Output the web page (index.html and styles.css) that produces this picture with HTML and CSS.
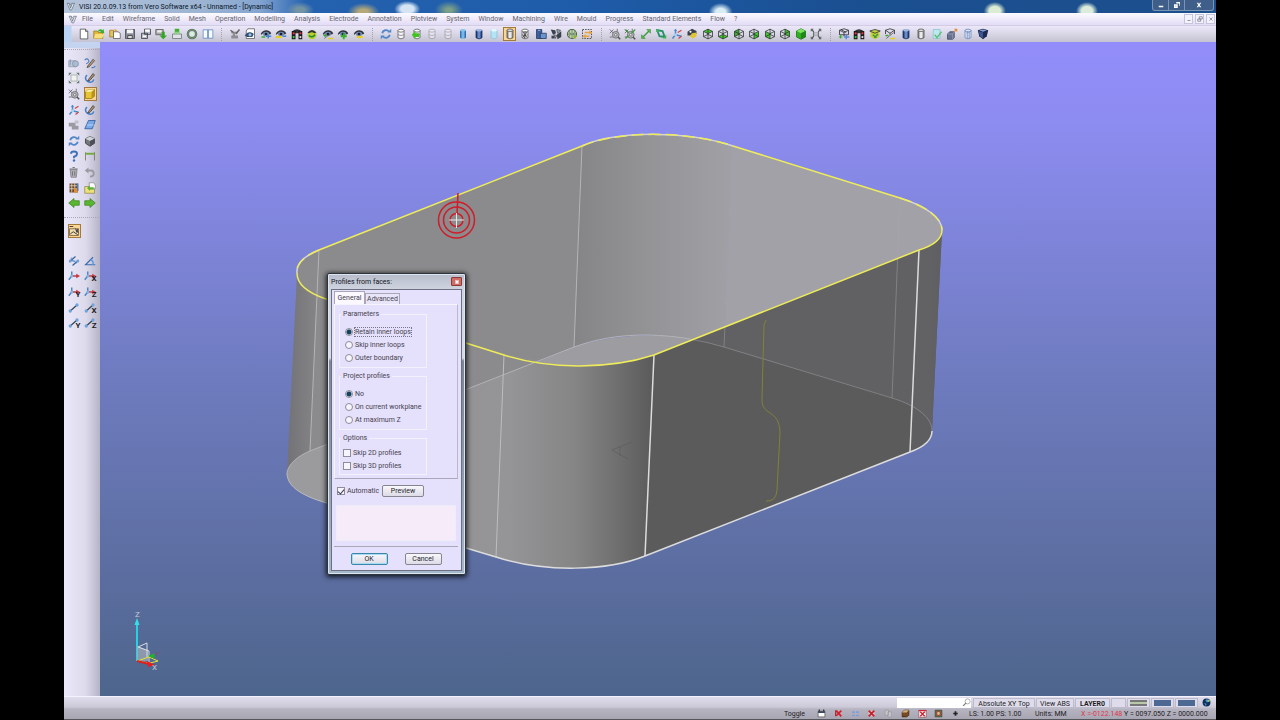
FILE: index.html
```html
<!DOCTYPE html>
<html lang="en">
<head>
<meta charset="utf-8">
<title>VISI 20.0.09.13 from Vero Software x64 - Unnamed - [Dynamic]</title>
<link rel="stylesheet" href="styles.css">
</head>
<body>
<svg class="sprite" aria-hidden="true">
  <defs>
    <linearGradient id="g-blue"><stop offset="0" stop-color="#1c63b0"/><stop offset=".5" stop-color="#8cc8f0"/><stop offset="1" stop-color="#1c5ca4"/></linearGradient>
    <linearGradient id="g-navy"><stop offset="0" stop-color="#0c2760"/><stop offset=".5" stop-color="#7f9fd8"/><stop offset="1" stop-color="#102c68"/></linearGradient>
    <linearGradient id="g-grey"><stop offset="0" stop-color="#777"/><stop offset=".5" stop-color="#fff"/><stop offset="1" stop-color="#888"/></linearGradient>
  </defs>
  <symbol id="logo" viewBox="0 0 16 16"><path d="M2 2l4 1 2 8 3-8 4-1-5 12H7z" fill="#e9edf2" stroke="#4a5560"/><path d="M5 1l3 4 3-4" fill="none" stroke="#6b7783"/></symbol>
  <symbol id="new" viewBox="0 0 16 16"><path d="M3 1.500h7l3 3v10H3z" fill="#fff" stroke="#444"/><path d="M10 1.500v3h3" fill="none" stroke="#444"/></symbol>
  <symbol id="open" viewBox="0 0 16 16"><path d="M1 4h5l1 2h6v8H1z" fill="#e3b83a" stroke="#9a7a20"/><path d="M3 8h12l-3 6H1z" fill="#f8df7c"/><path d="M6 5c2-4 5-4 7-2l1-2 1 6-6-1 2-1c-1-1-3-1-5 0z" fill="#39b02c"/></symbol>
  <symbol id="openpg" viewBox="0 0 16 16"><path d="M1 3h5v9H1z" fill="#e8c55a" stroke="#9a7a20"/><path d="M6 5h6l3 2v7H6z" fill="#fff" stroke="#555"/><path d="M7 1l4 2-3 2" fill="#e8a030"/></symbol>
  <symbol id="save" viewBox="0 0 16 16"><path d="M2 2h12v12H2z" fill="#8a8e98" stroke="#3c4048"/><path d="M4 2h8v5H4z" fill="#f4f4f4"/><path d="M5 10h6v4H5z" fill="#ddd" stroke="#333"/></symbol>
  <symbol id="saveall" viewBox="0 0 16 16"><path d="M6 1.500h8v7H6zM2 7h8v7H2z" fill="#b8bcc6" stroke="#343840"/><path d="M7 2h6v3H7zM4 10h4v2H4z" fill="#fff"/></symbol>
  <symbol id="import" viewBox="0 0 16 16"><path d="M1 2h10v7H1z" fill="#aaa" stroke="#555"/><path d="M3 3h6v3H3z" fill="#eee"/><path d="M9 5h4v5h3l-5 5-5-5h3z" fill="#35a428"/></symbol>
  <symbol id="print" viewBox="0 0 16 16"><path d="M5 1h6v7H5z" fill="#3fb031"/><path d="M2 8h12v6H2z" fill="#dfe3e6" stroke="#687078"/><path d="M4 8l1-3h6l1 3z" fill="#8ed082"/></symbol>
  <symbol id="ring" viewBox="0 0 16 16"><circle cx="8" cy="8" r="5.500" fill="none" stroke="#4d6c57" stroke-width="3"/><circle cx="8" cy="8" r="5.500" fill="none" stroke="#8fae88"/><circle cx="8" cy="8" r="3" fill="#d8efe0"/></symbol>
  <symbol id="book" viewBox="0 0 16 16"><path d="M1 2h14v12H1z" fill="#5b86bd"/><path d="M2 3h5v10H2zM9 3h5v10H9z" fill="#f7fbff"/></symbol>
  <symbol id="hammer" viewBox="0 0 16 16"><path d="M3 5h9v2H8v3h4v4H3v-4h2V7H3z" fill="#8d8d92"/><path d="M9 8l5-6M2 3l4 3" stroke="#666" stroke-width="2"/></symbol>
  <symbol id="eye" viewBox="0 0 16 16"><path d="M1 8C3 2 12 1 15 7l-2 2C11 4 5 5 2 9z" fill="#30343c"/><ellipse cx="8" cy="8" rx="4" ry="3" fill="#7089b0"/><circle cx="8" cy="8" r="1.800" fill="#16202e"/></symbol>
  <symbol id="eyepg" viewBox="0 0 16 16"><path d="M5 1h9v13H3V4z" fill="#fff" stroke="#555"/><path d="M1 10c3-5 8-6 12-2l-2 4H4z" fill="#33506e"/><circle cx="8" cy="9" r="2" fill="#9cc4ea"/></symbol>
  <symbol id="eyeblue" viewBox="0 0 16 16"><use href="#eye"/><path d="M8 11h7M11 8v6" stroke="#4a80d8" stroke-width="2"/><path d="M2 12h5" stroke="#38a838" stroke-width="2"/></symbol>
  <symbol id="eyebar" viewBox="0 0 16 16"><use href="#eye"/><path d="M1 12h8" stroke="#e2cf22" stroke-width="3"/><path d="M10 11h5" stroke="#4a80d8" stroke-width="2"/></symbol>
  <symbol id="traffic" viewBox="0 0 16 16"><path d="M2 4q6-5 12 0v3H2z" fill="#333"/><path d="M1 4h5v11H1zM10 4h5v11h-5z" fill="#1c1c1c"/><circle cx="3.500" cy="7" r="1.500" fill="#e33"/><circle cx="3.500" cy="12" r="1.500" fill="#3c3"/><circle cx="12.500" cy="7" r="1.500" fill="#e33"/><circle cx="12.500" cy="12" r="1.500" fill="#ddd"/></symbol>
  <symbol id="eyeball" viewBox="0 0 16 16"><circle cx="8" cy="9" r="6" fill="#b7cf33"/><path d="M2 6q6-7 12 0l-3 1q-3-3-7 0z" fill="#333"/><path d="M4 10q4 4 8-1" stroke="#268a2a" stroke-width="2" fill="none"/></symbol>
  <symbol id="eyepm" viewBox="0 0 16 16"><use href="#eye"/><path d="M3 14L12 7" stroke="#555"/><path d="M8 14h7" stroke="#e2cf22" stroke-width="2"/><path d="M2 10h4M4 8v4" stroke="#35a428" stroke-width="1.500"/></symbol>
  <symbol id="eyeplus" viewBox="0 0 16 16"><use href="#eye"/><path d="M5 11h8M9 7v8" stroke="#35b028" stroke-width="2.500"/></symbol>
  <symbol id="eyeminus" viewBox="0 0 16 16"><use href="#eye"/><path d="M5 12h8" stroke="#e8d020" stroke-width="3"/></symbol>
  <symbol id="refresh" viewBox="0 0 16 16"><path d="M3 7a5 5 0 0 1 9-2M13 9a5 5 0 0 1-9 2" fill="none" stroke="#5287c8" stroke-width="2.500"/><path d="M10 6h5V1zM6 10H1v5z" fill="#5287c8"/></symbol>
  <symbol id="cyl" viewBox="0 0 16 16"><path d="M4 3v10q4 3 8 0V3" fill="#f5f5f8" stroke="#555"/><ellipse cx="8" cy="3.500" rx="4" ry="2" fill="#fff" stroke="#555"/><path d="M4 9q4 2 8 0" fill="none" stroke="#777"/></symbol>
  <symbol id="cylgreen" viewBox="0 0 16 16"><use href="#cyl"/><path d="M1 9l5-5v3h5v5H6v3z" fill="#43c322"/></symbol>
  <symbol id="cylfade" viewBox="0 0 16 16"><use href="#cyl" opacity=".45"/></symbol>
  <symbol id="cylblue" viewBox="0 0 16 16"><path d="M4 3v10q4 3 8 0V3z" fill="url(#g-blue)"/><ellipse cx="8" cy="3" rx="4" ry="1.600" fill="#8ec4ea"/></symbol>
  <symbol id="cylnavy" viewBox="0 0 16 16"><path d="M4 3v10q4 3 8 0V3z" fill="url(#g-navy)" stroke="#122c5c"/><ellipse cx="8" cy="3" rx="4" ry="1.600" fill="#9fb8e2"/></symbol>
  <symbol id="cylcyan" viewBox="0 0 16 16"><path d="M4 3v10q4 3 8 0V3z" fill="#b5e3f4" stroke="#85bfd8"/><ellipse cx="8" cy="3" rx="4" ry="1.600" fill="#e7f8ff"/></symbol>
  <symbol id="cylgrey" viewBox="0 0 16 16"><path d="M4 3v10q4 3 8 0V3z" fill="url(#g-grey)" stroke="#444"/><ellipse cx="8" cy="3" rx="4" ry="1.600" fill="#eee" stroke="#444"/></symbol>
  <symbol id="cylhatch" viewBox="0 0 16 16"><use href="#cyl"/><path d="M5 5l6 8M11 5l-6 8M5 9l3 5M8 4v9" stroke="#333"/></symbol>
  <symbol id="cylwire" viewBox="0 0 16 16"><path d="M4 3v10q4 3 8 0V3M7 4v10M9.500 4v10" fill="#dfe6f7" stroke="#6680b8"/><ellipse cx="8" cy="3.500" rx="4" ry="2" fill="none" stroke="#6680b8"/></symbol>
  <symbol id="boxes" viewBox="0 0 16 16"><path d="M2 2h7v12H2z" fill="#3b5f9c" stroke="#1d355f"/><path d="M7 7h8v7H7z" fill="#6c94cc" stroke="#1d355f"/><path d="M4 3h3" stroke="#cde"/></symbol>
  <symbol id="pieces" viewBox="0 0 16 16"><path d="M1 2l6 1 1 4-4 2zM9 9l6-5v8l-5 3zM2 10l4 1v3H2z" fill="#39424e"/><path d="M9 2l5 1-4 4zM5 9l4 1-2 4z" fill="#9fb0c2" stroke="#444"/></symbol>
  <symbol id="globe" viewBox="0 0 16 16"><circle cx="8" cy="8" r="6" fill="#c7d6bd" stroke="#49653f" stroke-width="1.500"/><path d="M2 8h12M8 2v12M4 4q4 4 0 8M12 4q-4 4 0 8" stroke="#55774c" fill="none"/><path d="M9 10h6l-3 5z" fill="#8fb437"/></symbol>
  <symbol id="swap" viewBox="0 0 16 16"><path d="M2 2h12v12H2z" fill="none" stroke="#444" stroke-dasharray="2 1.500" stroke-width="1.200"/><path d="M5 5h6V3l4 3-4 3V7H5zM11 10H6V8l-4 3 4 3v-2h5z" fill="#e8a33a"/></symbol>
  <symbol id="gear" viewBox="0 0 16 16"><path d="M1 2l5 5M1 7l5-5M11 1v4M1 12h4" stroke="#555"/><circle cx="9" cy="9" r="4.500" fill="#b0b3b9" stroke="#666"/><circle cx="9" cy="9" r="1.700" fill="#eee" stroke="#666"/><path d="M12 12l3 3" stroke="#555" stroke-width="2"/></symbol>
  <symbol id="geargreen" viewBox="0 0 16 16"><use href="#gear"/><path d="M2 2l4 4M15 2l-5 5M2 14l4-4" stroke="#3b9b3b" stroke-width="1.500"/></symbol>
  <symbol id="dim" viewBox="0 0 16 16"><path d="M4 12L12 4" stroke="#3c9d3c" stroke-width="2"/><path d="M9 2h5v5zM2 9v5h5z" fill="#58b948" stroke="#2b7a2b" stroke-width=".6"/></symbol>
  <symbol id="loop" viewBox="0 0 16 16"><path d="M3 3l7 1 3 8-7-1z" fill="none" stroke="#25906a" stroke-width="2.500"/><path d="M1 5l4-4v5zM15 9v5h-5z" fill="#3fb554"/></symbol>
  <symbol id="axes" viewBox="0 0 16 16"><path d="M6 9V2M6 9l8 2M6 9l-4 5" stroke="#4a88c8" stroke-width="2"/><path d="M4 4l2-3 2 3z" fill="#4a88c8"/><path d="M9 6l5-3M10 14l4-3" stroke="#c44" stroke-width="1.500"/><circle cx="6" cy="9" r="2" fill="#aad0f0"/></symbol>
  <symbol id="python" viewBox="0 0 16 16"><path d="M2 5l6-4 6 3v4l-6 2H2z" fill="#38434c"/><path d="M8 7l6-1v5l-5 3-4-3z" fill="#e2c52e"/><circle cx="6" cy="5" r="1.400" fill="#fff"/></symbol>
  <symbol id="cube" viewBox="0 0 16 16"><path d="M8 1.500l6 3v7l-6 3-6-3v-7zM2 4.500l6 3 6-3M8 7.500v7M8 1.500v7M2 11.500l6-3 6 3" fill="none" stroke="#27332a"/></symbol>
  <symbol id="cubetop" viewBox="0 0 16 16"><path d="M8 1.500l6 3-6 3-6-3z" fill="#42c72f"/><use href="#cube"/></symbol>
  <symbol id="cubebot" viewBox="0 0 16 16"><path d="M8 8.500l6 3-6 3-6-3z" fill="#42c72f"/><use href="#cube"/></symbol>
  <symbol id="cubeback" viewBox="0 0 16 16"><path d="M2 4.500l6-3v7l-6 3z" fill="#42a72f"/><use href="#cube"/></symbol>
  <symbol id="cuberight" viewBox="0 0 16 16"><path d="M8 7.500l6-3v7l-6 3z" fill="#42c72f"/><use href="#cube"/></symbol>
  <symbol id="cubeleft" viewBox="0 0 16 16"><path d="M2 4.500l6 3v7l-6-3z" fill="#42c72f"/><use href="#cube"/></symbol>
  <symbol id="cubefar" viewBox="0 0 16 16"><path d="M8 1.500l6 3v7l-6-3z" fill="#42b72f"/><use href="#cube"/></symbol>
  <symbol id="cubefull" viewBox="0 0 16 16"><path d="M8 1l6 3v8l-6 3-6-3V4z" fill="#2fae20" stroke="#1a6f16"/><path d="M8 1l6 3-6 3-6-3z" fill="#7be35e"/><path d="M8 7l6-3v8l-6 3z" fill="#22861a"/></symbol>
  <symbol id="fit" viewBox="0 0 16 16"><path d="M2 2l3 3M14 2l-3 3M2 14l3-3M14 14l-3-3M5 5v6M11 5v6M8 6v1M8 9v1" stroke="#545c54" stroke-width="1.500"/><path d="M1 1h4L1 5zM15 1v4l-4-4zM1 15v-4l4 4zM15 15h-4l4-4z" fill="#5d6a60"/></symbol>
  <symbol id="gridblue" viewBox="0 0 16 16"><path d="M2 3l6-2 6 2v6H2zM2 3l6 3 6-3M8 6v5M4 2l7 4" fill="none" stroke="#222"/><path d="M1 12h5M3.500 9v5" stroke="#3a3" stroke-width="1.500"/><path d="M8 12h7M11 9v6" stroke="#5a88d8" stroke-width="2"/></symbol>
  <symbol id="gridyel" viewBox="0 0 16 16"><path d="M2 5l6-3 6 3v7l-6 3-6-3z" fill="#c4d03c"/><path d="M1 4l7-2 7 2-7 3z" fill="none" stroke="#222"/><path d="M5 9l5 4M12 8l-5 5" stroke="#3b9b3b" stroke-width="2"/></symbol>
  <symbol id="gridpm" viewBox="0 0 16 16"><path d="M2 3l6-2 6 2-6 4zM2 3v5M14 3v5M8 7v2" fill="none" stroke="#222"/><path d="M3 14l10-8" stroke="#555"/><path d="M8 14h7" stroke="#e2cf22" stroke-width="2"/><path d="M2 10h4" stroke="#3a3" stroke-width="2"/></symbol>
  <symbol id="check" viewBox="0 0 16 16"><path d="M3 2h9v12H3z" fill="#bde8ec" stroke="#86c3ce"/><path d="M5 9l3 4 6-8" fill="none" stroke="#64bf83" stroke-width="2"/></symbol>
  <symbol id="extrude" viewBox="0 0 16 16"><path d="M2 8l3-3h6v8l-2 2H2z" fill="#68738f" stroke="#3c4560"/><path d="M2 8h7v7M9 8l2-3" fill="none" stroke="#98a3be"/><path d="M10 5l2-2-1-2h4v4l-2-1-2 2z" fill="#e28b3a"/></symbol>
  <symbol id="gem" viewBox="0 0 16 16"><path d="M1 3l7-2 7 2-2 8-5 4-5-4z" fill="#1c2b52"/><path d="M2 4l6 2v8l-4-3z" fill="#3c5690"/><path d="M3 3l5-1 5 1-5 2z" fill="#8ba4d6"/></symbol>
  <symbol id="pencil" viewBox="0 0 16 16"><path d="M5 12L12 3l2 2-7 8-3 1z" fill="#b89c80" stroke="#4a3d32"/><path d="M1 4q3-3 5 0t-3 5M10 14q3 1 5-2" fill="none" stroke="#4a80c8" stroke-width="1.500"/></symbol>
  <symbol id="pencurve" viewBox="0 0 16 16"><path d="M4 4q-4 4 0 8 7 4 9-2" fill="none" stroke="#4a80c8" stroke-width="2"/><path d="M6 10l6-8 2 2-6 7-3 1z" fill="#a58f76" stroke="#4a3d32"/></symbol>
  <symbol id="view" viewBox="0 0 16 16"><path d="M1 5h9v8H1z" fill="#c3cbd6" stroke="#8f98a6"/><circle cx="10" cy="9" r="4" fill="#a9bcd4" stroke="#7f8fa6"/><path d="M3 3v8" stroke="#6c8fb8"/></symbol>
  <symbol id="zoomfit" viewBox="0 0 16 16"><path d="M4 4h8v8H4z" fill="#f0f2f0" stroke="#9aa89a"/><path d="M1 1h4L1 5zM15 1v4l-4-4zM1 15v-4l4 4zM15 15h-4l4-4z" fill="#5f7a68"/></symbol>
  <symbol id="solid" viewBox="0 0 16 16"><path d="M2 5l4-3h8v9l-4 3H2z" fill="#e5c534" stroke="#8e7412"/><path d="M2 5l4-3h8l-4 3z" fill="#fbf1a8"/><path d="M10 5l4-3v9l-4 3z" fill="#b8931e"/></symbol>
  <symbol id="stack" viewBox="0 0 16 16"><path d="M1 5h9v5H1zM5 9h9v5H5z" fill="#9a9aa0"/><path d="M9 2h5v4H9z" fill="#c0c0c4"/></symbol>
  <symbol id="sheet" viewBox="0 0 16 16"><path d="M6 2h9l-4 11H1z" fill="#78a9e8" stroke="#2a5596"/><path d="M4 8h9" stroke="#cfe3ff"/></symbol>
  <symbol id="box" viewBox="0 0 16 16"><path d="M2 5l6-3 6 3v6l-6 4-6-4z" fill="#74777c" stroke="#333"/><path d="M2 5l6-3 6 3-6 3z" fill="#cfd2d6"/><path d="M8 8l6-3v6l-6 4z" fill="#4e5156"/></symbol>
  <symbol id="help" viewBox="0 0 16 16"><path d="M4 5q0-3 4-3t4 3-4 4v2" fill="none" stroke="#3f6fb4" stroke-width="2.500"/><circle cx="8" cy="14" r="1.600" fill="#3f6fb4"/></symbol>
  <symbol id="span" viewBox="0 0 16 16"><path d="M2 3v11M14 3v11" stroke="#6d6d50"/><path d="M2 5h12" stroke="#74a83a" stroke-width="2.500"/></symbol>
  <symbol id="trash" viewBox="0 0 16 16"><path d="M3 5h9l-1 10H4z" fill="#b4b4b8" stroke="#77777c"/><path d="M2 4h11M6 2h3M6 7v6M9 7v6" stroke="#77777c" stroke-width="1.500"/></symbol>
  <symbol id="undo" viewBox="0 0 16 16"><path d="M5 6h4q4 0 4 4t-5 4" fill="none" stroke="#9a9aa0" stroke-width="2.500"/><path d="M6 2v8L1 6z" fill="#9a9aa0"/></symbol>
  <symbol id="tree" viewBox="0 0 16 16"><path d="M2 2h11v12H2z" fill="#6d4a2a"/><path d="M2 5h11M2 9h11M5 2v12M9 2v12" stroke="#e8e0d0"/><path d="M8 8h5v6H8z" fill="#e88a28"/><path d="M13 2v10" stroke="#4a80c8" stroke-width="2"/></symbol>
  <symbol id="note" viewBox="0 0 16 16"><path d="M1 6h9l4 3v6H1z" fill="#efe07a" stroke="#8e8850"/><path d="M7 1h6l2 3v5H7z" fill="#fff" stroke="#888"/><path d="M4 8l4-3v2h5v3H8v2z" fill="#5fb038"/></symbol>
  <symbol id="left" viewBox="0 0 16 16"><path d="M1 8l7-6v3h7v6H8v3z" fill="#5cb531" stroke="#3a851e"/></symbol>
  <symbol id="right" viewBox="0 0 16 16"><path d="M15 8L8 2v3H1v6h7v3z" fill="#5cb531" stroke="#3a851e"/></symbol>
  <symbol id="face" viewBox="0 0 16 16"><path d="M2 5h12v9H2z" fill="#f1dcae" stroke="#6b5637"/><path d="M3 12l4-3 6 4M2 2h5" stroke="#333" stroke-width="1.200" fill="none"/><path d="M9 3l2 3 3-1-1 3 2 2-4 0z" fill="#3f4752"/></symbol>
  <symbol id="parallel" viewBox="0 0 16 16"><path d="M2 9l8-7M6 14l8-7" stroke="#35618f" stroke-width="1.500"/><path d="M3 5l9 6M5 3v5h5" stroke="#4a80c8" fill="none"/><circle cx="3" cy="8" r="2" fill="#6fa0d8"/><circle cx="13" cy="8" r="2" fill="#6fa0d8"/></symbol>
  <symbol id="angle" viewBox="0 0 16 16"><path d="M12 3L2 13h13" fill="none" stroke="#3c6cae" stroke-width="1.500"/><path d="M9 6q4 2 3 7" fill="none" stroke="#5d9be0" stroke-width="2"/></symbol>
  <symbol id="triad" viewBox="0 0 16 16"><path d="M5 8V2M5 8l-4 5" stroke="#4a88c8" stroke-width="2"/><path d="M5 8h7" stroke="#c43840" stroke-width="2"/><path d="M11 5l5 3-5 3z" fill="#c43840"/><circle cx="5" cy="8" r="2" fill="#82b4e4"/></symbol>
  <symbol id="seg" viewBox="0 0 16 16"><path d="M3 12L12 4" stroke="#2d3f52" stroke-width="1.500"/><circle cx="3" cy="12" r="2.200" fill="#6fa4dc"/><circle cx="12" cy="4" r="2.200" fill="#6fa4dc"/></symbol>
  <symbol id="redx" viewBox="0 0 16 16"><path d="M3 3h10v10H3z" fill="#d8c7cb"/><path d="M3 3l10 10M13 3L3 13" stroke="#c81e28" stroke-width="3"/></symbol>
  <symbol id="redk" viewBox="0 0 16 16"><path d="M3 2v11" stroke="#8a2a38" stroke-width="2"/><path d="M4 3l9 10M13 3L4 12" stroke="#d81e28" stroke-width="3"/></symbol>
  <symbol id="redbox" viewBox="0 0 16 16"><path d="M1.500 2.500h13v12h-13z" fill="#fff" stroke="#8a2a38"/><path d="M1 3h14" stroke="#c81e28" stroke-width="2"/><path d="M4 5l8 8M12 5l-8 8" stroke="#d81e28" stroke-width="2.500"/></symbol>
  <symbol id="window" viewBox="0 0 16 16"><path d="M2 4h12v10H2z" fill="#fff" stroke="#333"/><path d="M2 4h12v3H2z" fill="#2c3c58"/><path d="M4 1v3M12 1v3" stroke="#222" stroke-width="2"/></symbol>
  <symbol id="snap" viewBox="0 0 16 16"><path d="M2 4h5v3H2zM9 4h5v3H9zM2 10h5v3H2zM9 10h5v3H9z" fill="#7c9ce0"/></symbol>
  <symbol id="docs" viewBox="0 0 16 16"><path d="M2 2h6v9H2zM7 5h6v9H7z" fill="#c8c8cc" stroke="#909096"/></symbol>
  <symbol id="crate" viewBox="0 0 16 16"><path d="M2 6l4-4h8v9l-4 3H2z" fill="#7a4b22" stroke="#2c1a0a"/><path d="M2 6l4-4h8l-4 4z" fill="#d8b080"/></symbol>
  <symbol id="target" viewBox="0 0 16 16"><path d="M2 2h12v12H2z" fill="#5f7347" stroke="#333"/><circle cx="8" cy="8" r="3.500" fill="#c8c8a0" stroke="#b2442a" stroke-width="2"/></symbol>
  <symbol id="plus" viewBox="0 0 16 16"><path d="M4 8h8M8 4v8" stroke="#222" stroke-width="3"/></symbol>
  <symbol id="lens" viewBox="0 0 16 16"><circle cx="10" cy="6" r="4.500" fill="none" stroke="#777"/><path d="M7 9l-5 5" stroke="#777" stroke-width="2"/></symbol>
  <symbol id="earth" viewBox="0 0 16 16"><circle cx="8" cy="8" r="7" fill="#12305c"/><path d="M8 2q5 0 5 4l-4 2-3-3zM4 9l4 1-1 4z" fill="#4a9ad8"/><circle cx="12" cy="5" r="2" fill="#9cc850"/></symbol>
</svg>

<div class="app">
  <header class="titlebar">
    <svg class="mark"><use href="#logo"/></svg>
    <h1>VISI 20.0.09.13 from Vero Software x64 - Unnamed - [Dynamic]</h1>
    <div class="winbtns">
      <button aria-label="Minimize"><svg viewBox="0 0 8 8"><path d="M1 5h6v2H1z"/></svg></button>
      <button aria-label="Restore"><svg viewBox="0 0 8 8"><path d="M3 0h5v5H7V2H3zM0 3h5v5H0zm2 2v1h1V5z"/></svg></button>
      <button class="wide" aria-label="Close"><svg viewBox="0 0 8 8"><path d="M1 1h2l1 2 1-2h2L5 4l2 3H5L4 5 3 7H1l2-3z"/></svg></button>
    </div>
  </header>

  <nav class="menubar" aria-label="Main menu">
    <svg class="mark"><use href="#logo"/></svg>
    <button>File</button><button>Edit</button><button>Wireframe</button><button>Solid</button><button>Mesh</button><button>Operation</button><button>Modelling</button><button>Analysis</button><button>Electrode</button><button>Annotation</button><button>Plotview</button><button>System</button><button>Window</button><button>Machining</button><button>Wire</button><button>Mould</button><button>Progress</button><button>Standard Elements</button><button>Flow</button><button>?</button>
    <div class="docbtns">
      <button aria-label="Minimize document"><svg viewBox="0 0 8 8"><path d="M2 6h4"/></svg></button>
      <button aria-label="Restore document"><svg viewBox="0 0 8 8"><path d="M3 1h4v3H3zM1 4h4v3H1z"/></svg></button>
      <button aria-label="Close document"><svg viewBox="0 0 8 8"><path d="M2 2l4 4M6 2L2 6"/></svg></button>
    </div>
  </nav>

  <div class="toolbar" role="toolbar" aria-label="Tools">
    <div class="group g9">
      <button aria-label="New"><svg><use href="#new"/></svg></button>
      <button aria-label="Open"><svg><use href="#open"/></svg></button>
      <button aria-label="Insert"><svg><use href="#openpg"/></svg></button>
      <button aria-label="Save"><svg><use href="#save"/></svg></button>
      <button aria-label="Save all"><svg><use href="#saveall"/></svg></button>
      <button aria-label="Import"><svg><use href="#import"/></svg></button>
      <button aria-label="Print"><svg><use href="#print"/></svg></button>
      <button aria-label="Settings"><svg><use href="#ring"/></svg></button>
      <button aria-label="Manual"><svg><use href="#book"/></svg></button>
    </div>
    <i class="sep"></i>
    <div class="group g9">
      <button aria-label="Edit attributes"><svg><use href="#hammer"/></svg></button>
      <button aria-label="Inspect"><svg><use href="#eyepg"/></svg></button>
      <button aria-label="Show selected"><svg><use href="#eyeblue"/></svg></button>
      <button aria-label="Hide selected"><svg><use href="#eyebar"/></svg></button>
      <button aria-label="Filter"><svg><use href="#traffic"/></svg></button>
      <button aria-label="Swap visible"><svg><use href="#eyeball"/></svg></button>
      <button aria-label="Toggle visible"><svg><use href="#eyepm"/></svg></button>
      <button aria-label="Show"><svg><use href="#eyeplus"/></svg></button>
      <button aria-label="Hide"><svg><use href="#eyeminus"/></svg></button>
    </div>
    <i class="sep"></i>
    <div class="group g14">
      <button aria-label="Redraw"><svg><use href="#refresh"/></svg></button>
      <button aria-label="Wireframe"><svg><use href="#cyl"/></svg></button>
      <button aria-label="Convert"><svg><use href="#cylgreen"/></svg></button>
      <button aria-label="Hidden lines"><svg><use href="#cylfade"/></svg></button>
      <button aria-label="Dashed lines"><svg><use href="#cylfade"/></svg></button>
      <button aria-label="Shaded"><svg><use href="#cylblue"/></svg></button>
      <button aria-label="Shaded with edges"><svg><use href="#cylnavy"/></svg></button>
      <button aria-label="Transparent"><svg><use href="#cylcyan"/></svg></button>
      <button class="on" aria-label="Dynamic"><svg><use href="#cylgrey"/></svg></button>
      <button aria-label="Mesh view"><svg><use href="#cylhatch"/></svg></button>
      <button aria-label="Bodies"><svg><use href="#boxes"/></svg></button>
      <button aria-label="Explode"><svg><use href="#pieces"/></svg></button>
      <button aria-label="Environment"><svg><use href="#globe"/></svg></button>
      <button aria-label="Exchange"><svg><use href="#swap"/></svg></button>
    </div>
    <i class="sep"></i>
    <div class="group g14">
      <button aria-label="Zoom window"><svg><use href="#gear"/></svg></button>
      <button aria-label="Zoom all"><svg><use href="#geargreen"/></svg></button>
      <button aria-label="Measure"><svg><use href="#dim"/></svg></button>
      <button aria-label="Rotate"><svg><use href="#loop"/></svg></button>
      <button aria-label="Axes"><svg><use href="#axes"/></svg></button>
      <button aria-label="Spin"><svg><use href="#python"/></svg></button>
      <button aria-label="Top view"><svg><use href="#cubetop"/></svg></button>
      <button aria-label="Bottom view"><svg><use href="#cubebot"/></svg></button>
      <button aria-label="Back view"><svg><use href="#cubeback"/></svg></button>
      <button aria-label="Right view"><svg><use href="#cuberight"/></svg></button>
      <button aria-label="Left view"><svg><use href="#cubeleft"/></svg></button>
      <button aria-label="Rear view"><svg><use href="#cubefar"/></svg></button>
      <button aria-label="Isometric view"><svg><use href="#cubefull"/></svg></button>
      <button aria-label="Fit"><svg><use href="#fit"/></svg></button>
    </div>
    <i class="sep"></i>
    <div class="group g10">
      <button aria-label="Show solids"><svg><use href="#gridblue"/></svg></button>
      <button aria-label="Filter solids"><svg><use href="#traffic"/></svg></button>
      <button aria-label="Swap solids"><svg><use href="#gridyel"/></svg></button>
      <button aria-label="Toggle solids"><svg><use href="#gridpm"/></svg></button>
      <button aria-label="Solid shading"><svg><use href="#cylnavy"/></svg></button>
      <button aria-label="Solid edges"><svg><use href="#cylgrey"/></svg></button>
      <button aria-label="Validate"><svg><use href="#check"/></svg></button>
      <button aria-label="Extrude"><svg><use href="#extrude"/></svg></button>
      <button aria-label="Solid wireframe"><svg><use href="#cylwire"/></svg></button>
      <button aria-label="Render"><svg><use href="#gem"/></svg></button>
    </div>
  </div>

  <main class="work">
    <aside class="side">
      <div class="pad tall">
        <button aria-label="View manager"><svg><use href="#view"/></svg></button><button aria-label="Sketch"><svg><use href="#pencil"/></svg></button>
        <button aria-label="Zoom to fit"><svg><use href="#zoomfit"/></svg></button><button aria-label="Sketch arc"><svg><use href="#pencurve"/></svg></button>
        <button aria-label="Zoom tools"><svg><use href="#gear"/></svg></button><button class="on" aria-label="Solid tools"><svg><use href="#solid"/></svg></button>
        <button aria-label="Workplane"><svg><use href="#axes"/></svg></button><button aria-label="Sketch curve"><svg><use href="#pencurve"/></svg></button>
        <button aria-label="Layers"><svg><use href="#stack"/></svg></button><button aria-label="Surface"><svg><use href="#sheet"/></svg></button>
        <button aria-label="Refresh"><svg><use href="#refresh"/></svg></button><button aria-label="Body"><svg><use href="#box"/></svg></button>
        <button aria-label="Help"><svg><use href="#help"/></svg></button><button aria-label="Dimension"><svg><use href="#span"/></svg></button>
        <button aria-label="Delete"><svg><use href="#trash"/></svg></button><button aria-label="Undo"><svg><use href="#undo"/></svg></button>
        <button aria-label="Model tree"><svg><use href="#tree"/></svg></button><button aria-label="Notes"><svg><use href="#note"/></svg></button>
        <button aria-label="Back"><svg><use href="#left"/></svg></button><button aria-label="Forward"><svg><use href="#right"/></svg></button>
      </div>
      <div class="pad single"><button class="on" aria-label="Profiles from faces"><svg><use href="#face"/></svg></button></div>
      <div class="pad short">
        <button aria-label="Parallel"><svg><use href="#parallel"/></svg></button><button aria-label="Angle"><svg><use href="#angle"/></svg></button>
        <button aria-label="Vector"><svg><use href="#triad"/></svg></button><button><svg><use href="#triad"/></svg><b>X</b></button>
        <button><svg><use href="#triad"/></svg><b>Y</b></button><button><svg><use href="#triad"/></svg><b>Z</b></button>
        <button aria-label="Segment"><svg><use href="#seg"/></svg></button><button><svg><use href="#seg"/></svg><b>X</b></button>
        <button><svg><use href="#seg"/></svg><b>Y</b></button><button><svg><use href="#seg"/></svg><b>Z</b></button>
      </div>
    </aside>

    <section class="viewport">
      <svg class="model" viewBox="100 42 1116 654" role="img" aria-label="Open box with rounded corners">
        <defs>
          <linearGradient id="inner" gradientUnits="userSpaceOnUse" x1="575" y1="0" x2="740" y2="0"><stop offset="0" stop-color="#858587"/><stop offset=".45" stop-color="#949497"/><stop offset="1" stop-color="#a2a1a7"/></linearGradient>
          <linearGradient id="front" gradientUnits="userSpaceOnUse" x1="460" y1="0" x2="652" y2="0"><stop offset="0" stop-color="#949497"/><stop offset=".25" stop-color="#959597"/><stop offset=".6" stop-color="#858586"/><stop offset=".85" stop-color="#6c6c6d"/><stop offset="1" stop-color="#5b5b5c"/></linearGradient>
          <linearGradient id="leftc" gradientUnits="userSpaceOnUse" x1="287" y1="0" x2="330" y2="0"><stop offset="0" stop-color="#737377"/><stop offset="1" stop-color="#8d8d8f"/></linearGradient>
          <linearGradient id="rightc" gradientUnits="userSpaceOnUse" x1="905" y1="0" x2="942" y2="0"><stop offset="0" stop-color="#5e5e60"/><stop offset=".7" stop-color="#5e5e60"/><stop offset="1" stop-color="#515154"/></linearGradient>
        </defs>
        <path fill="url(#leftc)" d="M319 250C304 256 296 264 297 273L287 473C287 488 305 497 330 504L496 557 504 355 326 299z"/>
        <path fill="#8b8b8d" d="M319 250L582 146 574 347 310 451z"/>
        <path fill="#8b8b8d" d="M319 250C304 256 296 264 297 273 297 284 308 293 326 299L504 355 574 347 582 146z"/>
        <path fill="#9b9b9e" d="M287 473C288 464 298 456 310 451L330 443V504C305 497 287 488 287 473z"/>
        <path fill="url(#inner)" d="M582 146C618 130 690 131 733 146L724 347C680 333 620 330 574 347z"/>
        <path fill="#a2a1a7" d="M733 146L900 198C926 206 942 218 942 230 942 240 932 246 919 250L654 355 724 347z"/>
        <path fill="#9d9ca1" d="M574 347C618 332 670 334 700 340L654 355C610 371 545 368 504 355L540 361z"/>
        <path fill="url(#front)" d="M466 343L504 355C548 369 608 370 654 355L645 556C612 571 545 573 496 557L466 548z"/>
        <path fill="#8b8b8d" d="M466 343L504 355 540 361 466 390z"/>
        <path fill="#5b5b5c" d="M654 355L919 250 910 452 645 556z"/>
        <path fill="url(#rightc)" d="M919 250C932 246 942 240 942 230L932 431C932 441 924 447 910 452z"/>
        <path fill="#636365" d="M766 311L919 250C932 246 942 240 942 230L932 431C932 420 918 406 892 398L695 339z" opacity=".8"/>
        <path class="back" d="M287 473C288 464 298 456 310 451L574 347C618 331 660 334 690 339"/>
        <path class="faint" d="M690 339Q707 342 724 347L892 398C918 406 932 418 932 431M733 146L724 347M900 198L892 398"/>
        <path class="back" d="M582 146L574 347M319 250L310 451"/>
        <path class="edge thin" d="M504 355L496 557M287 473C287 488 305 497 330 504L466 548"/>
        <path class="edge" d="M466 548L496 557C545 573 608 571 645 556L910 452C924 447 932 441 932 431"/>
        <path class="edge" d="M654 355L645 556M919 250L910 452"/>
        <path class="rimbase" d="M319 250C304 256 296 264 297 273M582 146C618 130 690 131 733 146M900 198C926 206 942 218 942 230"/>
        <path class="rim" d="M319 250L582 146M733 146L900 198M942 230C942 240 932 246 919 250L654 355C608 370 548 369 504 355L326 299C308 293 297 284 297 273"/>
        <path class="rim dashed" d="M319 250C304 256 296 264 297 273M582 146C618 130 690 131 733 146M900 198C926 206 942 218 942 230"/>
        <path class="profile" d="M766 320L764 325 762 398C761 417 779 408 780 432L777 490Q776 502 766 501"/>
        <path d="M632 442L612 450 628 459M620 446v10" fill="none" stroke="#58585a" opacity=".5"/>
        <g class="pick"><circle cx="456.500" cy="220" r="18"/><circle cx="456.500" cy="220" r="13"/><circle cx="456.500" cy="220" r="6.500"/><path d="M458 193L457 214"/></g>
        <path d="M449 220h15M456.500 213v15" stroke="#e8e8e8"/>
        <g fill="none">
          <path d="M137 661V622" stroke="#25d3e0" stroke-width="2"/><path d="M134.500 625l2.500-7 2.500 7z" fill="#35e0e8"/>
          <path d="M137 661v-15l11 4v11z" fill="#a6abb8" opacity=".7"/><path d="M138 647l9-4v14M138 647l11 4v11" stroke="#d8dce4"/>
          <path d="M137 661l12-4 9 4-8 2z" stroke="#e4e432"/><path d="M137 661l12 3" stroke="#e02020" stroke-width="2"/><path d="M147 661l8 4-7 2z" fill="#e02020"/>
          <path d="M149 656l5-2v4z" fill="#1fb428" stroke="#1fb428"/><path d="M155 655l4-3" stroke="#a04060"/>
        </g>
        <text x="135" y="617">Z</text><text x="152" y="670">X</text>
      </svg>

      <form class="dialog" role="dialog" aria-labelledby="dlg-title">
        <header><h2 id="dlg-title">Profiles from faces:</h2><button type="button" class="close" aria-label="Close dialog"><svg viewBox="0 0 8 8"><path d="M2 2l4 4M6 2L2 6"/></svg></button></header>
        <div class="body">
          <div class="tabs" role="tablist"><button type="button" role="tab" aria-selected="true">General</button><button type="button" role="tab" aria-selected="false">Advanced</button></div>
          <div class="panel" role="tabpanel">
            <fieldset>
              <legend>Parameters</legend>
              <label><input type="radio" name="loops" checked><span class="focus">Retain inner loops</span></label>
              <label><input type="radio" name="loops"><span>Skip inner loops</span></label>
              <label><input type="radio" name="loops"><span>Outer boundary</span></label>
            </fieldset>
            <fieldset>
              <legend>Project profiles</legend>
              <label><input type="radio" name="project" checked><span>No</span></label>
              <label><input type="radio" name="project"><span>On current workplane</span></label>
              <label><input type="radio" name="project"><span>At maximum Z</span></label>
            </fieldset>
            <fieldset class="opts">
              <legend>Options</legend>
              <label><input type="checkbox"><span>Skip 2D profiles</span></label>
              <label><input type="checkbox"><span>Skip 3D profiles</span></label>
            </fieldset>
          </div>
          <div class="auto"><label><input type="checkbox" checked><span>Automatic</span></label><button type="button" class="btn">Preview</button></div>
          <textarea aria-label="Messages" readonly></textarea>
          <div class="actions"><button type="button" class="btn default">OK</button><button type="button" class="btn">Cancel</button></div>
        </div>
      </form>
    </section>
  </main>

  <footer class="status">
    <div class="row">
      <label class="find"><input type="text" aria-label="Search"><svg><use href="#lens"/></svg></label>
      <button class="cell plane">Absolute XY Top</button>
      <button class="cell abs">View ABS</button>
      <button class="cell layer">LAYER0</button>
      <span class="cell blank"></span>
      <span class="cell sw"><i class="lines"></i></span>
      <span class="cell sw"><i></i></span>
      <span class="cell sw"><i></i></span>
      <svg class="earth"><use href="#earth"/></svg>
    </div>
    <div class="row low">
      <button class="toggle">Toggle</button>
      <div class="snaps">
        <button aria-label="Snap window"><svg><use href="#window"/></svg></button>
        <button aria-label="Snap off"><svg><use href="#redk"/></svg></button>
        <button aria-label="Snap grid"><svg><use href="#snap"/></svg></button>
        <button aria-label="Snap points off"><svg><use href="#redx"/></svg></button>
        <button aria-label="Copies"><svg><use href="#docs"/></svg></button>
        <button aria-label="Solid snap"><svg><use href="#crate"/></svg></button>
        <button aria-label="Filter off"><svg><use href="#redbox"/></svg></button>
        <button aria-label="Target snap"><svg><use href="#target"/></svg></button>
        <button aria-label="Point snap"><svg><use href="#plus"/></svg></button>
      </div>
      <span class="scale">LS: 1.00 PS: 1.00</span>
      <span class="units">Units: MM</span>
      <span class="coords"><em>X =-0122.148</em> Y = 0097.050 Z = 0000.000</span>
    </div>
  </footer>
</div>
</body>
</html>
```

FILE: styles.css
```css
* { box-sizing: border-box; }

body {
  margin: 0;
  background: #000;
  color: #33323c;
  font: 7px/10px Roboto, "Open Sans", sans-serif;
}

h1, h2 { margin: 0; font: inherit; }

button {
  margin: 0;
  padding: 0;
  border: 0;
  background: none;
  color: inherit;
  font: inherit;
}

svg { display: block; flex: none; }
.sprite { position: absolute; width: 0; height: 0; }

.app {
  display: flex;
  flex-direction: column;
  min-height: 100vh;
  margin: 0 5%;
}

/* Title bar */
.titlebar {
  display: flex;
  align-items: center;
  height: 13px;
  padding-left: 2px;
  background:
    radial-gradient(ellipse 14px 8px at 20.500% 10px, #7494a4 30%, transparent),
    radial-gradient(ellipse 16px 9px at 26% 12px, #b4a878 30%, transparent),
    radial-gradient(ellipse 13px 8px at 29.800% 9px, #d4e4f4 50%, transparent),
    radial-gradient(ellipse 14px 9px at 33.400% 10px, #7ba088 20%, transparent),
    radial-gradient(ellipse 12px 9px at 57% 12px, #d8ecf4 40%, transparent),
    radial-gradient(ellipse 11px 9px at 80.800% 11px, #dcecd4 50%, transparent),
    radial-gradient(ellipse 11px 9px at 88.800% 11px, #dcecdc 50%, transparent),
    linear-gradient(90deg, #b4c4da, #9cb4d2 12%, #84a4d0 17%, #2462b0 21%, #1e5ba8 45%, #1a4f90 70%, #1c4f8c);
}
.mark { width: 9px; height: 9px; }
.titlebar h1 { margin-left: 4px; color: #0c1628; white-space: nowrap; }
.winbtns { display: flex; margin-left: auto; margin-right: 2px; height: 11px; align-self: flex-start; background: #3f5f8a; border: 1px solid #7c94b4; border-top: 0; border-radius: 0 0 3px 3px; }
.winbtns button { display: grid; place-items: center; width: 16px; border-right: 1px solid #7c94b4; }
.winbtns button.wide { width: 28px; border: 0; }
.winbtns svg { width: 6px; height: 6px; fill: #fff; }

/* Menu bar */
.menubar {
  display: flex;
  align-items: center;
  height: 13px;
  padding-left: 4px;
  background: linear-gradient(#fcfaff, #e2dcf6);
  border-bottom: 1px solid #d2cce4;
  color: #66646e;
}
.menubar > button { margin-left: 9px; white-space: nowrap; }
.menubar .mark + button { margin-left: 5px; }
.docbtns { display: flex; gap: 2px; margin-left: auto; margin-right: 1px; }
.docbtns button { display: grid; place-items: center; width: 9px; height: 10px; border: 1px solid #c6c4dc; background: #f4f3fc; }
.docbtns svg { width: 6px; height: 6px; fill: none; stroke: #77758a; }

/* Icon toolbar */
.toolbar {
  display: flex;
  align-items: center;
  height: 16px;
  padding-left: 13px;
  background: linear-gradient(90deg, #b9d3f4 0 7px, transparent 8px), linear-gradient(#ece8fa, #c5c3d2);
}
.group { display: flex; justify-content: space-between; }
.g9 { width: 137px; }
.g14 { width: 215px; }
.g10 { width: 153px; }
.sep { width: 1px; height: 13px; margin: 0 6px 0 7px; border-left: 1px dotted #a19fb0; }
.toolbar button, .pad button { position: relative; display: grid; place-items: center; width: 13px; height: 14px; }
.toolbar svg, .pad svg { width: 12px; height: 12px; }
.toolbar .on, .pad .on { background: #fbd596; outline: 1px solid #a4793c; outline-offset: -1px; }

/* Workspace */
.work { display: flex; flex: 1; }
.side {
  width: 36px;
  padding-top: 7px;
  background: linear-gradient(90deg, #ebe8fb, #dddaec 60%, #b5b4c6);
  box-shadow: inset 0 6px 0 #c4d4f0;
}
.pad { display: grid; grid-template-columns: 16px 16px; grid-auto-rows: 1fr; place-items: center; padding: 0 2px; border-top: 1px dotted #a8a6b8; }
.tall { height: 168px; padding-top: 5px; padding-bottom: 6px; }
.single { height: 26px; }
.short { height: 88px; border: 0; padding-top: 10px; }
.pad b { position: absolute; right: 0; bottom: 0; font-size: 8px; line-height: 8px; color: #1b1b24; }

.viewport { position: relative; flex: 1; background: linear-gradient(#928dfa, #8d8cf1 12%, #6f7cc0 50%, #5b6d9f 82%, #4d668c); }
.model { position: absolute; width: 100%; height: 100%; }
.edge { fill: none; stroke: #dcdcde; stroke-width: 1.500; }
.thin { stroke: #bdbdc0; stroke-width: 1; }
.back { fill: none; stroke: #b4b4b8; }
.faint { fill: none; stroke: #a9a9ae; opacity: .45; }
.rim { fill: none; stroke: #eeec5a; stroke-width: 1.500; }
.rimbase { fill: none; stroke: #d4d4dc; stroke-width: 1.500; }
.dashed { stroke-dasharray: 12 5; }
.profile { fill: none; stroke: #82823a; }
.pick { fill: none; stroke: #d01c28; stroke-width: 1.500; }
.model text { fill: #c4cad8; font-size: 8px; }

/* Dialog */
.dialog {
  position: absolute;
  left: 227px;
  top: 231px;
  width: 139px;
  padding: 0 3px 3px;
  border: 1px solid #2c3440;
  border-radius: 2px;
  background: linear-gradient(#b6bccb, #cdd2de 14px, #d8dbe6 28%, #7e8894 29%, #8a98a8 60%, #a6b8cc);
  box-shadow: 0 1px 5px 1px rgba(0, 0, 0, .8), inset 0 0 0 1px #dce4ee;
  color: #45434f;
}
.dialog header { display: flex; align-items: center; justify-content: space-between; height: 15px; color: #16161e; }
.close { display: grid; place-items: center; width: 11px; height: 9px; border: 1px solid #8c3a38; border-radius: 1px; background: #cf6c66; }
.close svg { width: 6px; height: 6px; stroke: #fff; stroke-width: 2; }
.body { padding: 1px 3px 5px 2px; border: 1px solid #6c7080; background: #e5e0fb; }
.tabs { display: flex; align-items: flex-end; height: 13px; }
.tabs button { width: 35px; height: 11px; border: 1px solid #a9a6b8; border-bottom: 0; background: #e9e5f8; }
.tabs button[aria-selected="true"] { width: 31px; height: 13px; background: #fbf9ff; }
.panel { padding: 5px 30px 3px 4px; border: 1px solid #f6f4ff; border-right-color: #bbb8cc; border-bottom-color: #aaa7bb; }
fieldset { min-width: 0; height: 58px; margin: 0 0 4px; padding: 6px 0 0 5px; border: 1px solid #f3f1fe; }
fieldset.opts { height: 41px; margin: 0; padding: 3px 0 0 3px; }
legend { padding: 0 2px; margin-left: -4px; line-height: 9px; }
.opts legend { margin-left: -2px; }
.dialog label { display: flex; align-items: center; gap: 2px; height: 13px; white-space: nowrap; }
.dialog input { appearance: none; flex: none; width: 8px; height: 8px; margin: 0; border: 1px solid #8e8d9c; background: #f6f5fb; }
.dialog input[type="radio"] { border-radius: 50%; }
.dialog input[type="radio"]:checked { background: radial-gradient(circle, #16405c 0 2px, #dcebf4 3px); }
.dialog input[type="checkbox"]:checked::before { content: ""; display: block; width: 3px; height: 5px; margin: 0 auto; border: solid #3a3a58; border-width: 0 1px 1px 0; transform: rotate(40deg); }
.focus { line-height: 8px; outline: 1px dotted #77758a; }
.auto { display: flex; align-items: center; justify-content: space-between; padding: 5px 34px 0 3px; }
.auto .btn { flex: none; }
.btn { height: 12px; width: 42px; border: 1px solid #87858f; border-radius: 2px; background: linear-gradient(#f8f7fb, #dddbe6); color: #26252e; }
textarea { display: block; width: calc(100% - 4px); height: 36px; margin: 8px 0 5px 2px; border: 1px solid #efecfa; background: #f6ebf8; resize: none; }
.actions { display: flex; justify-content: space-around; padding: 6px 8px 0; border-top: 1px solid #aaa7bb; }
.actions .btn { width: 37px; }
.actions .default { border-color: #3c86ac; box-shadow: inset 0 0 0 1px #a4dcf0; }

/* Status bar */
.status { height: 24px; border-top: 1px solid #f4f2fc; border-bottom: 1px solid #55555c; background: linear-gradient(#dfdced, #cccad8 45%, #b6b4c0 55%, #a8a6b2); color: #1e1d26; white-space: nowrap; }
.row { display: flex; align-items: center; justify-content: flex-end; height: 11px; }
.row svg { width: 9px; height: 9px; }
.find { display: flex; align-items: center; width: 74px; height: 10px; background: #fff; margin-right: 1px; }
.find input { flex: 1; min-width: 0; width: 0; height: 9px; padding: 0; border: 0; background: none; font: inherit; }
.cell { display: grid; place-items: center; height: 10px; margin-left: 1px; border: 1px solid #bdbbcb; background: #dedcea; }
.plane { width: 62px; }
.abs { width: 38px; }
.layer { width: 35px; font-weight: 700; }
.blank { width: 15px; }
.sw { width: 23px; }
.sw i { width: 17px; height: 6px; background: #4d6892; }
.sw .lines { background: linear-gradient(#777 2px, #b9c8a8 2px 4px, #777 4px); }
.row .earth { margin: 0 5px 0 4px; }
.toggle { margin-right: 12px; }
.snaps { display: flex; justify-content: space-between; width: 143px; margin-right: 9px; }
.scale { width: 66px; }
.units { width: 46px; }
.coords { width: 126px; margin-right: 9px; }
.coords em { color: #e0344c; font-style: normal; }
```
